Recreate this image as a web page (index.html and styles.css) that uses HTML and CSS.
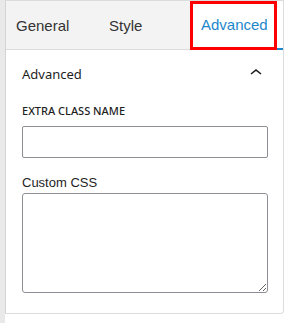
FILE: index.html
```html
<!DOCTYPE html>
<html lang="en">
<head>
    <meta charset="UTF-8">
    <meta name="viewport" content="width=device-width, initial-scale=1.0">
    <title>Block Settings</title>
    <link rel="stylesheet" href="styles.css">
</head>
<body>
    <div class="sidebar">
        <div class="panel">
            <nav class="tabs">
                <button class="tab">General</button>
                <button class="tab">Style</button>
                <button class="tab active">Advanced</button>
                <span class="highlight"></span>
            </nav>

            <section class="panel-body">
                <div class="panel-header">
                    <span>Advanced</span>
                    <svg class="chevron" width="24" height="24" viewBox="0 0 24 24">
                        <path d="M6.5 12.4L12 8l5.5 4.4-.9 1.2L12 10l-4.6 3.6-.9-1.2z"/>
                    </svg>
                </div>

                <div class="field">
                    <label for="extra-class" class="caps-label">Extra class name</label>
                    <input type="text" id="extra-class">
                </div>

                <div class="field field-css">
                    <label for="custom-css" class="plain-label">Custom CSS</label>
                    <textarea id="custom-css"></textarea>
                </div>
            </section>
        </div>
    </div>
</body>
</html>
```

FILE: styles.css
```css
:root {
    --accent: #1e87cc;
    --strip: #e9e9e9;
    --border: #dcdcdc;
    --tab-bg: #f3f3f3;
    --text: #1e1e1e;
    --input-border: #8c8f94;
}

* {
    margin: 0;
    padding: 0;
    box-sizing: border-box;
}

body {
    background: #ffffff;
    font-family: 'Liberation Sans', Arial, sans-serif;
    color: var(--text);
}

.sidebar {
    border-left: 5px solid var(--strip);
    min-height: 323px;
}

.panel {
    position: relative;
    border: 1px solid var(--border);
    border-left-color: #d4d4d4;
    border-radius: 0 0 4px 0;
    height: 314px;
}

.tabs {
    position: relative;
    display: flex;
    height: 49px;
    background: var(--tab-bg);
    border-bottom: 1px solid var(--border);
}

.tab {
    width: 92px;
    padding: 0 10px;
    border: none;
    background: none;
    font-family: 'Liberation Sans', Arial, sans-serif;
    font-size: 15px;
    color: #333333;
    text-align: left;
    cursor: pointer;
}

.tab:nth-child(2) {
    padding-left: 11px;
}

.tab.active {
    flex: 1;
    background: #ffffff;
    color: var(--accent);
    padding-left: 11px;
    border-bottom: 2px solid var(--accent);
    margin-bottom: -1px;
}

/* annotation box over the active tab */
.highlight {
    position: absolute;
    left: 184px;
    top: 0;
    width: 87px;
    height: 49px;
    border: 3px solid #ff0000;
    pointer-events: none;
}

.panel-body {
    padding: 0 15px 20px 16px;
}

.panel-header {
    display: flex;
    align-items: center;
    justify-content: space-between;
    height: 48px;
    font-family: 'Noto Sans', 'Open Sans', sans-serif;
    font-size: 13px;
}

.chevron {
    fill: #1e1e1e;
    margin-top: -2px;
}

.field {
    margin-top: 5px;
}

.caps-label {
    display: block;
    font-family: 'Noto Sans', 'Open Sans', sans-serif;
    font-size: 11px;
    font-weight: 500;
    line-height: 16px;
    text-transform: uppercase;
    margin-bottom: 7px;
}

.field input {
    display: block;
    width: 100%;
    height: 32px;
    border: 1px solid var(--input-border);
    border-radius: 2px;
    padding: 0 8px;
    font-size: 13px;
}

.field-css {
    margin-top: 16px;
}

.plain-label {
    display: block;
    font-size: 13px;
    line-height: 18px;
    margin-bottom: 1px;
}

.field textarea {
    display: block;
    width: 100%;
    height: 100px;
    border: 1px solid var(--input-border);
    border-radius: 3px;
    resize: vertical;
    padding: 6px 8px;
}
```
